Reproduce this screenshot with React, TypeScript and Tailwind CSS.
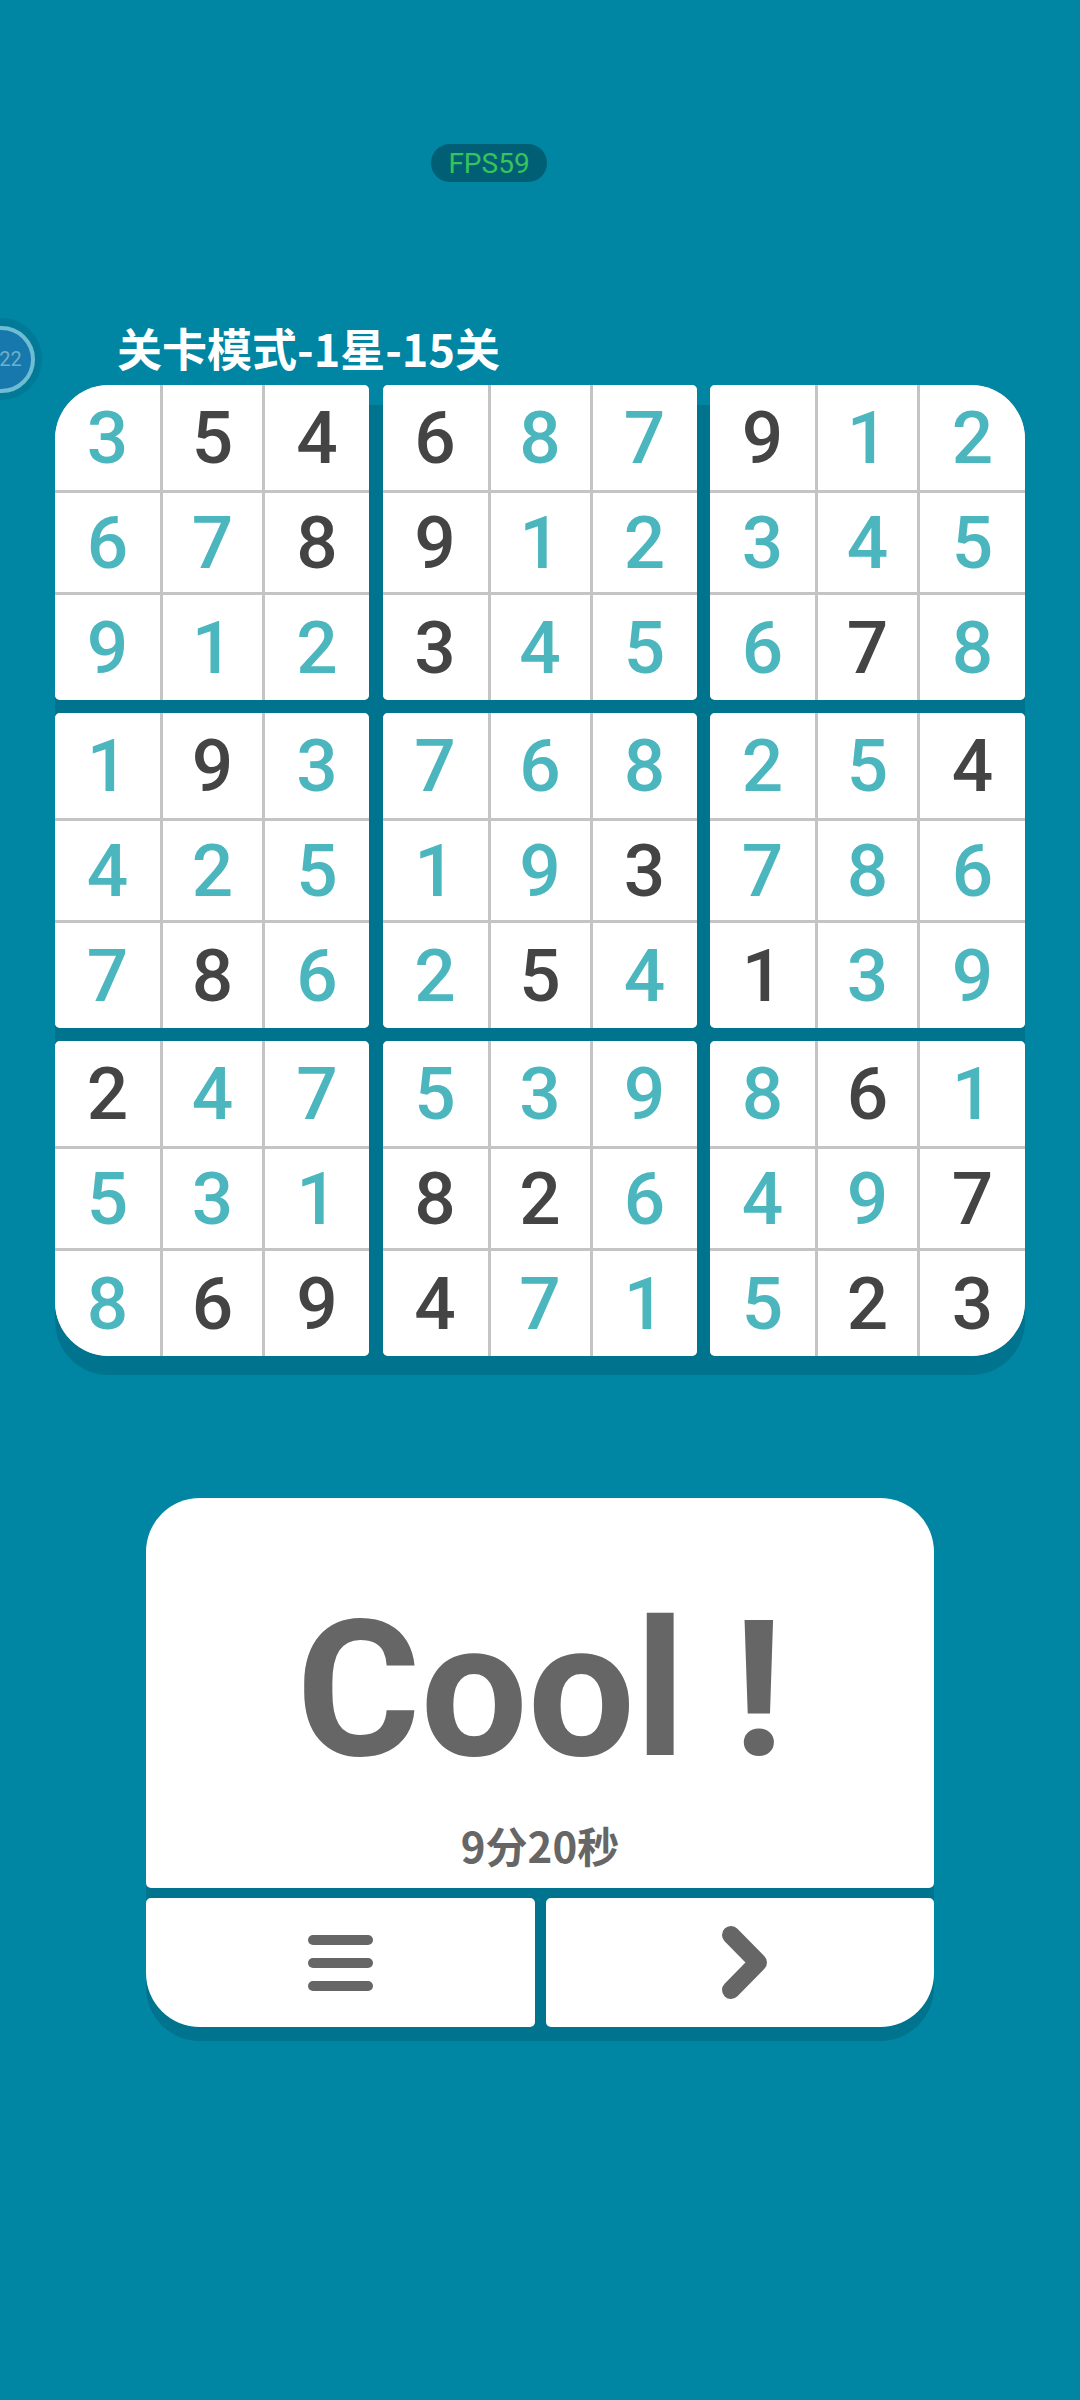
const grid: string[][] = [
  ["354", "687", "912", "678", "912", "345", "912", "345", "678"],
  ["193", "768", "254", "425", "193", "786", "786", "254", "139"],
  ["247", "539", "861", "531", "826", "497", "869", "471", "523"],
].flatMap((bank) => [0, 1, 2].map((g) => [bank[g], bank[g + 3], bank[g + 6]]));

const givens: boolean[][][] = [
  [[false, true, true], [false, false, true], [false, false, false]],
  [[true, false, false], [true, false, false], [true, false, false]],
  [[true, false, false], [false, false, false], [false, true, false]],
  [[false, true, false], [false, false, false], [false, true, false]],
  [[false, false, false], [false, false, true], [false, true, false]],
  [[false, false, true], [false, false, false], [true, false, false]],
  [[true, false, false], [false, false, false], [false, true, true]],
  [[false, false, false], [true, true, false], [true, false, false]],
  [[false, true, false], [false, false, true], [false, true, true]],
];

const corners: Record<number, string> = {
  0: "rounded-tl-[54px]",
  2: "rounded-tr-[54px]",
  6: "rounded-bl-[54px]",
  8: "rounded-br-[54px]",
};

function Box({ index }: { index: number }) {
  const rows = grid[index];
  const corner = corners[index] ?? "";
  return (
    <div
      className={`rounded-[5px] overflow-hidden grid grid-cols-[105px_99px_1fr] grid-rows-[105px_99px_1fr] gap-[3px] bg-[#c4c4c4] ${corner}`}
    >
      {rows.map((row, r) =>
        row.split("").map((d, c) => (
          <div
            key={`${r}${c}`}
            className={`bg-white pt-[2px] flex items-center justify-center text-[73px] leading-none font-medium font-['Roboto',sans-serif] ${
              givens[index][r][c] ? "text-[#444444]" : "text-[#4bb6bd]"
            }`}
          >
            {d}
          </div>
        )),
      )}
    </div>
  );
}

export default function App() {
  return (
    <div className="relative w-[1080px] h-[2400px] bg-[#0085a3] overflow-hidden flex flex-col font-['Noto_Sans_CJK_SC',sans-serif]">
      <div className="absolute left-[-40px] top-[318px] w-[82px] h-[82px] rounded-full bg-[#007a96] flex items-center justify-center">
        <div className="w-[67px] h-[67px] rounded-full bg-[#1778ad] border-[4px] border-[#6fbdd3] flex items-center justify-center text-[20px] pl-[19px] text-[#6fb0c8] font-['Roboto',sans-serif]">
          22
        </div>
      </div>

      <div className="pt-[144px] pl-[431px] flex">
        <div className="w-[116px] h-[38px] pt-[1px] rounded-full bg-[#005f75] flex items-center justify-center text-[28px] leading-none text-[#36c45a] font-['Roboto',sans-serif]">
          FPS59
        </div>
      </div>

      <div className="mt-[136px] ml-[117px] h-[58px] flex items-center text-[45px] leading-none font-bold text-white whitespace-nowrap">
        关卡模式-1星-15关
      </div>
      <div className="mt-[9px] ml-[55px] w-[970px] h-[971px] grid grid-cols-[314px_314px_315px] grid-rows-[315px_315px_315px] gap-x-[13.5px] gap-y-[13px] rounded-[54px] bg-[linear-gradient(to_bottom,transparent_20px,#00738e_20px)] shadow-[0_19px_0_#00738e]">
        {Array.from({ length: 9 }, (_, i) => (
          <Box key={i} index={i} />
        ))}
      </div>

      <div className="mt-[142px] ml-[146px] w-[788px] h-[529px] flex flex-col gap-[10px] rounded-[54px] bg-[linear-gradient(to_bottom,transparent_20px,#00738e_20px)] shadow-[0_14px_0_#00738e]">
        <div className="h-[390px] bg-white rounded-t-[54px] rounded-b-[5px] flex flex-col items-center text-[#666666]">
          <div className="mt-[107px] h-[170px] flex items-center text-[190px] leading-none font-bold whitespace-nowrap font-['Roboto',sans-serif]">
            Cool !
          </div>
          <div className="mt-[49px] text-[42px] leading-none font-bold whitespace-nowrap">9分20秒</div>
        </div>
        <div className="flex-1 flex gap-[11px]">
          <div className="flex-1 bg-white rounded-tl-[5px] rounded-tr-[5px] rounded-br-[5px] rounded-bl-[54px] flex items-center justify-center">
            <div className="w-[65px] flex flex-col gap-[13px]">
              <div className="h-[10px] rounded-full bg-[#666666]" />
              <div className="h-[10px] rounded-full bg-[#666666]" />
              <div className="h-[10px] rounded-full bg-[#666666]" />
            </div>
          </div>
          <div className="flex-1 bg-white rounded-tl-[5px] rounded-tr-[5px] rounded-bl-[5px] rounded-br-[54px] flex items-center justify-center">
            <svg className="ml-[9px]" width="45" height="73" viewBox="0 0 45 73" fill="none">
              <path d="M9 9 L36 36.5 L9 64" stroke="#666666" strokeWidth="18" strokeLinecap="round" strokeLinejoin="round" />
            </svg>
          </div>
        </div>
      </div>
    </div>
  );
}
